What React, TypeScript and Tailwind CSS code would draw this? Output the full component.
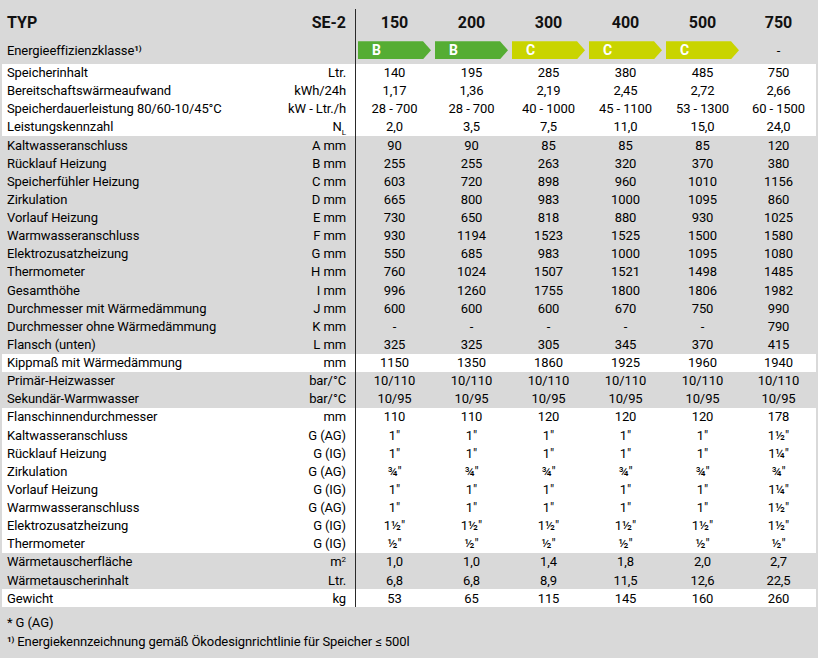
import React from 'react';

type Row = {
  label: string;
  unit: React.ReactNode;
  values: string[];
  white: boolean;
};

const models = ['150', '200', '300', '400', '500', '750'];

// energy classes per model, null = no label
const energy: (string | null)[] = ['B', 'B', 'C', 'C', 'C', null];

const rep = (v: string, n = 6) => Array(n).fill(v);

const rows: Row[] = [
  { label: 'Speicherinhalt', unit: 'Ltr.', values: ['140', '195', '285', '380', '485', '750'], white: true },
  { label: 'Bereitschaftswärmeaufwand', unit: 'kWh/24h', values: ['1,17', '1,36', '2,19', '2,45', '2,72', '2,66'], white: true },
  { label: 'Speicherdauerleistung 80/60-10/45°C', unit: 'kW - Ltr./h', values: ['28 - 700', '28 - 700', '40 - 1000', '45 - 1100', '53 - 1300', '60 - 1500'], white: true },
  {
    label: 'Leistungskennzahl',
    unit: (
      <span>
        N<span className="relative top-[4px] text-[8px]">L</span>
      </span>
    ),
    values: ['2,0', '3,5', '7,5', '11,0', '15,0', '24,0'],
    white: true,
  },
  { label: 'Kaltwasseranschluss', unit: 'A mm', values: ['90', '90', '85', '85', '85', '120'], white: false },
  { label: 'Rücklauf Heizung', unit: 'B mm', values: ['255', '255', '263', '320', '370', '380'], white: false },
  { label: 'Speicherfühler Heizung', unit: 'C mm', values: ['603', '720', '898', '960', '1010', '1156'], white: false },
  { label: 'Zirkulation', unit: 'D mm', values: ['665', '800', '983', '1000', '1095', '860'], white: false },
  { label: 'Vorlauf Heizung', unit: 'E mm', values: ['730', '650', '818', '880', '930', '1025'], white: false },
  { label: 'Warmwasseranschluss', unit: 'F mm', values: ['930', '1194', '1523', '1525', '1500', '1580'], white: false },
  { label: 'Elektrozusatzheizung', unit: 'G mm', values: ['550', '685', '983', '1000', '1095', '1080'], white: false },
  { label: 'Thermometer', unit: 'H mm', values: ['760', '1024', '1507', '1521', '1498', '1485'], white: false },
  { label: 'Gesamthöhe', unit: 'I mm', values: ['996', '1260', '1755', '1800', '1806', '1982'], white: false },
  { label: 'Durchmesser mit Wärmedämmung', unit: 'J mm', values: ['600', '600', '600', '670', '750', '990'], white: false },
  { label: 'Durchmesser ohne Wärmedämmung', unit: 'K mm', values: ['-', '-', '-', '-', '-', '790'], white: false },
  { label: 'Flansch (unten)', unit: 'L mm', values: ['325', '325', '305', '345', '370', '415'], white: false },
  { label: 'Kippmaß mit Wärmedämmung', unit: 'mm', values: ['1150', '1350', '1860', '1925', '1960', '1940'], white: true },
  { label: 'Primär-Heizwasser', unit: 'bar/°C', values: rep('10/110'), white: false },
  { label: 'Sekundär-Warmwasser', unit: 'bar/°C', values: rep('10/95'), white: false },
  { label: 'Flanschinnendurchmesser', unit: 'mm', values: ['110', '110', '120', '120', '120', '178'], white: true },
  { label: 'Kaltwasseranschluss', unit: 'G (AG)', values: [...rep('1″', 5), '1½″'], white: true },
  { label: 'Rücklauf Heizung', unit: 'G (IG)', values: [...rep('1″', 5), '1¼″'], white: true },
  { label: 'Zirkulation', unit: 'G (AG)', values: rep('¾″'), white: true },
  { label: 'Vorlauf Heizung', unit: 'G (IG)', values: [...rep('1″', 5), '1¼″'], white: true },
  { label: 'Warmwasseranschluss', unit: 'G (AG)', values: [...rep('1″', 5), '1½″'], white: true },
  { label: 'Elektrozusatzheizung', unit: 'G (IG)', values: rep('1½″'), white: true },
  { label: 'Thermometer', unit: 'G (IG)', values: rep('½″'), white: true },
  {
    label: 'Wärmetauscherfläche',
    unit: (
      <span>
        m<span className="relative -top-[4px] text-[8px]">2</span>
      </span>
    ),
    values: ['1,0', '1,0', '1,4', '1,8', '2,0', '2,7'],
    white: false,
  },
  { label: 'Wärmetauscherinhalt', unit: 'Ltr.', values: ['6,8', '6,8', '8,9', '11,5', '12,6', '22,5'], white: false },
  { label: 'Gewicht', unit: 'kg', values: ['53', '65', '115', '145', '160', '260'], white: true },
];

const EnergyBadge = ({ cls }: { cls: string }) => (
  <div
    className={`ml-[2px] h-[18px] w-[73px] flex items-center pl-[14px] text-[14px] font-bold text-white [clip-path:polygon(0_0,calc(100%-8px)_0,100%_50%,calc(100%-8px)_100%,0_100%)] ${
      cls === 'B' ? 'bg-[#55ad33]' : 'bg-[#c9d400]'
    }`}
  >
    {cls}
  </div>
);

export default function App() {
  return (
    <div
      className="w-[818px] h-[658px] bg-[#d9d9d9] text-black text-[13px] tracking-[-0.1px] leading-none overflow-hidden"
      style={{ fontFamily: 'Roboto, "Liberation Sans", sans-serif' }}
    >
      <div className="pt-[9px]">
        {/* header */}
        <div className="flex h-[28px] mx-[2px]">
          <div className="w-[353px] flex items-center justify-between pl-[5px] pr-[9px] text-[16px] font-bold tracking-normal text-[#111]">
            <span>TYP</span>
            <span>SE-2</span>
          </div>
          <div className="flex flex-1 border-l border-[#2a2a2a]">
            {models.map((m) => (
              <div key={m} className="w-[77px] last:w-[75px] flex items-center justify-center text-[16px] font-bold tracking-normal text-[#111]">
                {m}
              </div>
            ))}
          </div>
        </div>

        {/* energy class */}
        <div className="flex h-[26.5px] mx-[2px]">
          <div className="w-[353px] flex items-center pl-[5px]">
            <span>
              Energieeffizienzklasse<span className="relative -top-[4px] text-[8px] font-bold">1)</span>
            </span>
          </div>
          <div className="flex flex-1 border-l border-[#2a2a2a]">
            {energy.map((e, i) => (
              <div key={i} className="w-[77px] last:w-[75px] flex items-center">
                {e ? <EnergyBadge cls={e} /> : <span className="w-full text-center">-</span>}
              </div>
            ))}
          </div>
        </div>

        {/* data rows */}
        {rows.map((r, i) => (
          <div key={i} className={`flex h-[18.14px] mx-[2px] ${r.white ? 'bg-white' : ''}`}>
            <div className="w-[353px] flex items-center justify-between pl-[5px] pr-[9px]">
              <span>{r.label}</span>
              <span>{r.unit}</span>
            </div>
            <div className="flex flex-1 border-l border-[#2a2a2a]">
              {r.values.map((v, j) => (
                <div key={j} className="w-[77px] last:w-[75px] flex items-center justify-center">
                  {v}
                </div>
              ))}
            </div>
          </div>
        ))}

        {/* footnotes */}
        <div className="pl-[7px] pt-[9px] flex flex-col gap-[6px]">
          <span>* G (AG)</span>
          <span>
            <span className="relative -top-[4px] text-[8px] font-bold">1)</span> Energiekennzeichnung gemäß Ökodesignrichtlinie für Speicher ≤ 500l
          </span>
        </div>
      </div>
    </div>
  );
}
